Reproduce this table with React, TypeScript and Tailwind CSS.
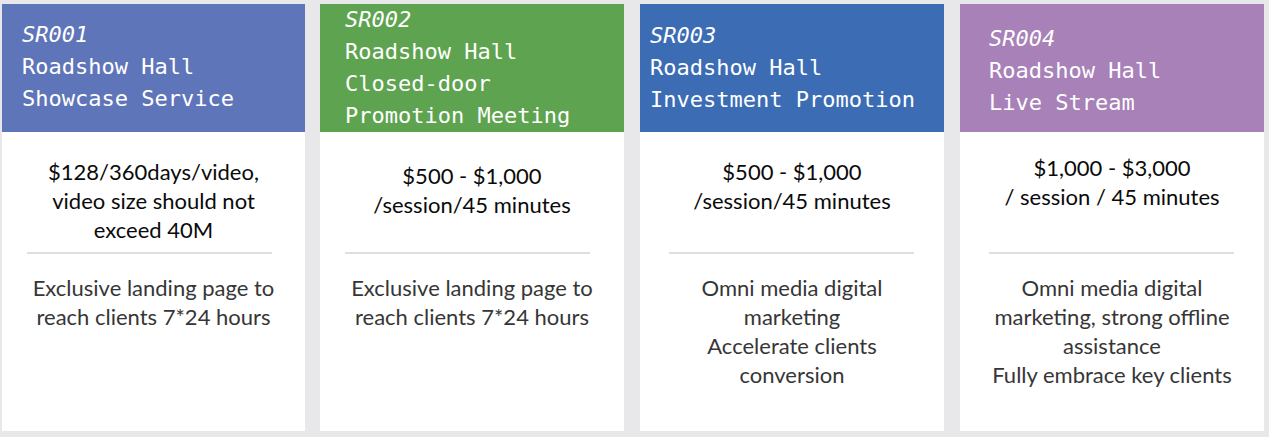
const cards = [
  {
    code: "SR001",
    title: ["Roadshow Hall", "Showcase Service"],
    box: "w-[303px]",
    header: "bg-[#5f75b9] pl-[20px] pt-[15px]",
    price: ["$128/360days/video,", "video size should not", "exceed 40M"],
    pricePad: "pt-[25px]",
    rule: "ml-[25px]",
    desc: ["Exclusive landing page to", "reach clients 7*24 hours"],
  },
  {
    code: "SR002",
    title: ["Roadshow Hall", "Closed-door", "Promotion Meeting"],
    box: "w-[304px] ml-[15px]",
    header: "bg-[#5ea34f] pl-[25px] pt-0",
    price: ["$500 - $1,000", "/session/45 minutes"],
    pricePad: "pt-[29px]",
    rule: "ml-[25px]",
    desc: ["Exclusive landing page to", "reach clients 7*24 hours"],
  },
  {
    code: "SR003",
    title: ["Roadshow Hall", "Investment Promotion"],
    box: "w-[304px] ml-[16px]",
    header: "bg-[#3b6cb4] pl-[10px] pt-[16px]",
    price: ["$500 - $1,000", "/session/45 minutes"],
    pricePad: "pt-[25px]",
    rule: "ml-[29px]",
    desc: ["Omni media digital", "marketing", "Accelerate clients", "conversion"],
  },
  {
    code: "SR004",
    title: ["Roadshow Hall", "Live Stream"],
    box: "w-[304px] ml-[16px]",
    header: "bg-[#a781b8] pl-[29px] pt-[19px]",
    price: ["$1,000 - $3,000", "/ session / 45 minutes"],
    pricePad: "pt-[21px]",
    rule: "ml-[29px]",
    desc: ["Omni media digital", "marketing, strong offline", "assistance", "Fully embrace key clients"],
  },
];

export default function App() {
  return (
    <div className="w-[1269px] h-[437px] bg-[#e8e8eb] pl-[2px] pt-[4px] flex overflow-hidden">
      {cards.map((c) => (
        <div key={c.code} className={`h-[427px] shrink-0 bg-white flex flex-col ${c.box}`}>
          <div
            className={`h-[128px] text-white text-[22px] leading-[32px] ${c.header}`}
            style={{ fontFamily: '"DejaVu Sans Mono", monospace' }}
          >
            <div className="italic">{c.code}</div>
            {c.title.map((t) => (
              <div key={t} className="whitespace-pre">{t}</div>
            ))}
          </div>
          <div className="text-center" style={{ fontFamily: "Lato, sans-serif" }}>
            <div className={`h-[120px] text-[22px] leading-[29px] text-[#0a0a0a] ${c.pricePad}`}>
              {c.price.map((p) => (
                <div key={p}>{p}</div>
              ))}
            </div>
            <div className={`h-[2px] w-[245px] bg-[#dcdee4] ${c.rule}`} />
            <div className="pt-[19px] text-[22px] leading-[29px] text-[#363636]">
              {c.desc.map((d) => (
                <div key={d}>{d}</div>
              ))}
            </div>
          </div>
        </div>
      ))}
    </div>
  );
}
